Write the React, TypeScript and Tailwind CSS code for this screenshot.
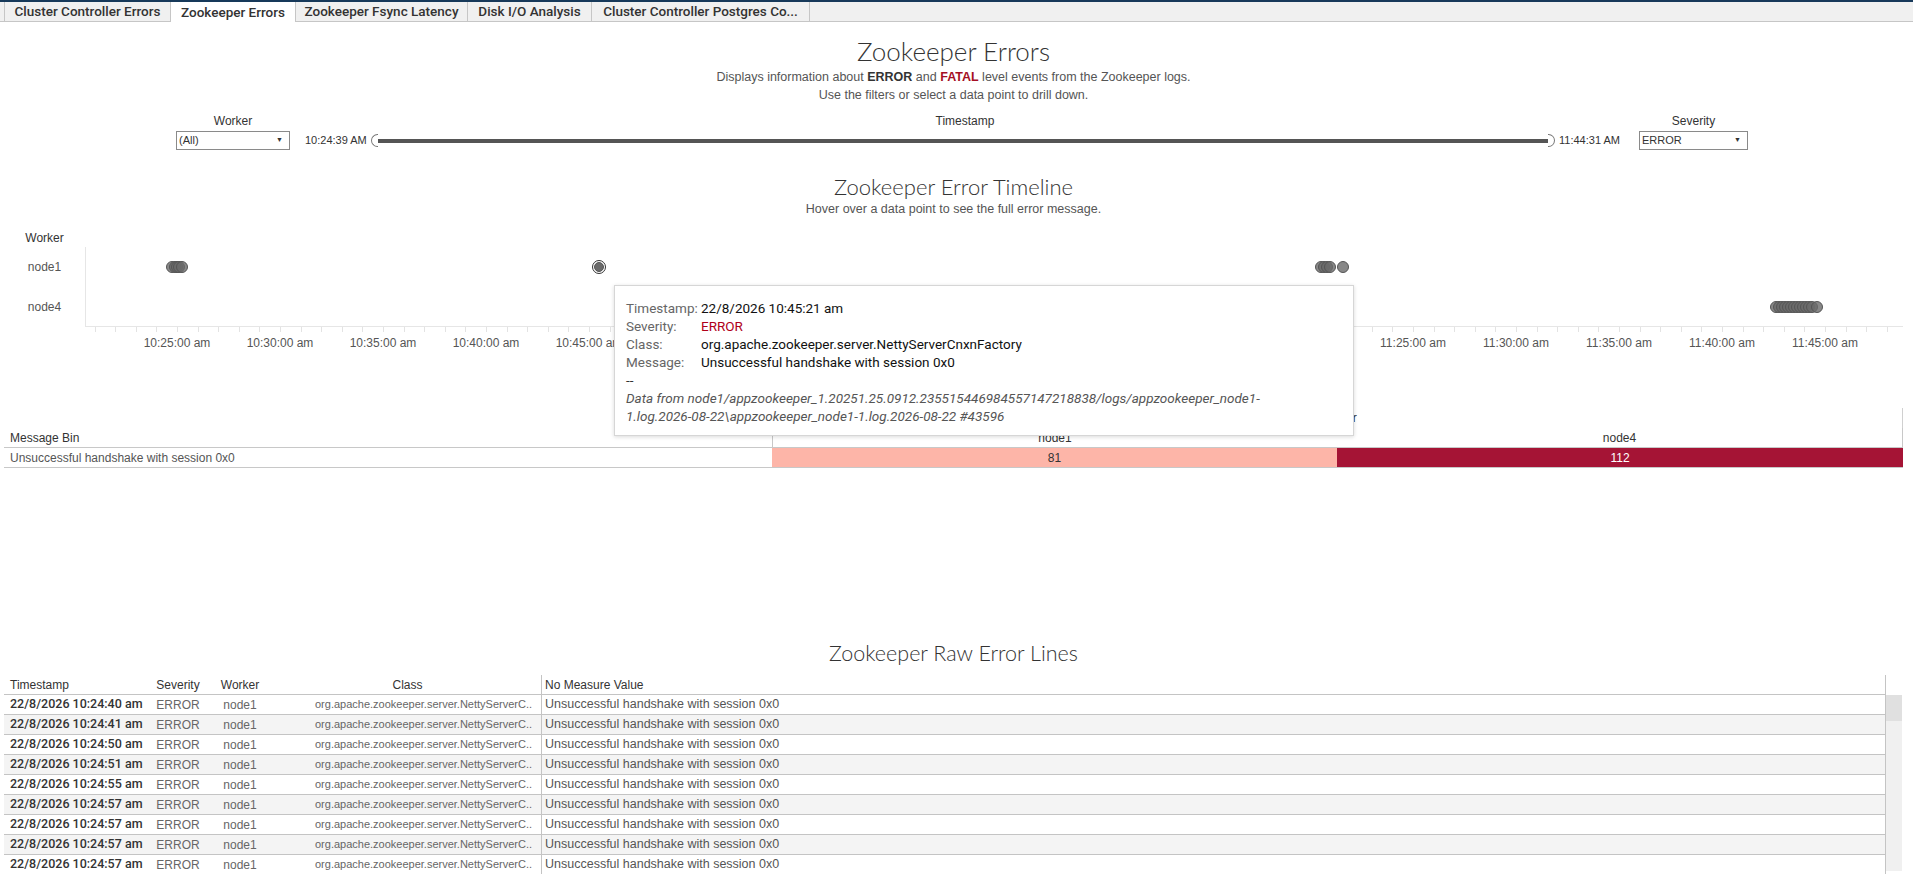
import React from "react";

const tabs = [
  { label: "Cluster Controller Errors", cls: "w-[167px] border-l border-[#c6c6c6] bg-[#f0f0f0]" },
  { label: "Zookeeper Errors", cls: "w-[125px] bg-white h-[20px]" },
  { label: "Zookeeper Fsync Latency", cls: "w-[172px] bg-[#f0f0f0]" },
  { label: "Disk I/O Analysis", cls: "w-[124px] bg-[#f0f0f0]" },
  { label: "Cluster Controller Postgres Co...", cls: "w-[218px] bg-[#f0f0f0]" },
];

const PLOT_LEFT = 85;
const xAt = (t: number) => 177 - PLOT_LEFT + t * 20.6;

const node1Dots = [171, 174, 176, 178, 181, 1320, 1323, 1326, 1329, 1342];
const node4Dots = [1775, 1778, 1781, 1784, 1787, 1790, 1793, 1796, 1799, 1802, 1805, 1808, 1811, 1816];

const axisLabels = Array.from({ length: 17 }, (_, i) => {
  const total = 25 + i * 5;
  const h = 10 + Math.floor(total / 60);
  const m = total % 60;
  return { t: i * 5, text: `${h}:${m.toString().padStart(2, "0")}:00 am` };
});

const ticks = Array.from({ length: 88 }, (_, i) => i - 4);

const rawRows = [
  "22/8/2026 10:24:40 am",
  "22/8/2026 10:24:41 am",
  "22/8/2026 10:24:50 am",
  "22/8/2026 10:24:51 am",
  "22/8/2026 10:24:55 am",
  "22/8/2026 10:24:57 am",
  "22/8/2026 10:24:57 am",
  "22/8/2026 10:24:57 am",
  "22/8/2026 10:24:57 am",
];

function Dot({ x, y }: { x: number; y: number }) {
  return (
    <div
      className="absolute w-[12px] h-[12px] rounded-full bg-[#6a6a6a]/80 border border-[#555]"
      style={{ left: x - PLOT_LEFT - 6, top: y - 6 }}
    />
  );
}

function Dropdown({ value, w }: { value: string; w: string }) {
  return (
    <div className={`${w} h-[19px] border border-[#8a8a8a] bg-white flex items-center justify-between pl-[2px] pr-[6px]`}>
      <span className="text-[11px] text-[#333]">{value}</span>
      <span className="text-[7px] text-[#333]">▼</span>
    </div>
  );
}

export default function App() {
  return (
    <div className="relative w-full h-[874px] overflow-hidden bg-white text-[#333] font-['Liberation_Sans',Arial,sans-serif]">
      {/* Tab bar */}
      <div className="h-[22px] border-t-2 border-t-[#17395a] border-b border-b-[#c6c6c6] bg-[#f0f0f0] flex pl-[4px]">
        {tabs.map((t) => (
          <div
            key={t.label}
            className={`${t.cls} h-[19px] border-r border-[#c6c6c6] flex items-center justify-center text-[13.5px] font-['Roboto',sans-serif] font-medium text-[#333] whitespace-nowrap`}
          >
            {t.label}
          </div>
        ))}
      </div>

      <div className="pl-[4px] pr-[10px]">
        {/* Title */}
        <div className="mt-[14px] text-center leading-[30px] text-[26px] font-['Lato',sans-serif] font-light text-[#333]">
          Zookeeper Errors
        </div>
        <div className="mt-[2px] text-center text-[12.5px] leading-[18px] text-[#555]">
          <div>
            Displays information about <span className="font-bold text-[#333]">ERROR</span> and{" "}
            <span className="font-bold text-[#a50f23]">FATAL</span> level events from the Zookeeper logs.
          </div>
          <div>Use the filters or select a data point to drill down.</div>
        </div>

        {/* Filters */}
        <div className="mt-[8px] flex items-start pl-[172px]">
          <div className="flex flex-col items-center w-[114px]">
            <div className="h-[18px] leading-[18px] text-[12px] text-[#333]">Worker</div>
            <div className="mt-[1px]">
              <Dropdown value="(All)" w="w-[114px]" />
            </div>
          </div>
          <div className="ml-[15px] flex flex-col items-center">
            <div className="h-[18px] leading-[18px] text-[12px] text-[#333]">Timestamp</div>
            <div className="mt-[1px] h-[19px] flex items-center">
              <span className="text-[11px] text-[#333] w-[66px]">10:24:39 AM</span>
              <div className="w-[7px] h-[13px] rounded-l-full border border-[#777] border-r-0 bg-white" />
              <div className="w-[1170px] h-[4px] bg-[#555]" />
              <div className="w-[7px] h-[13px] rounded-r-full border border-[#777] border-l-0 bg-white" />
              <span className="text-[11px] text-[#333] ml-[4px] w-[66px]">11:44:31 AM</span>
            </div>
          </div>
          <div className="ml-[14px] flex flex-col items-center w-[109px]">
            <div className="h-[18px] leading-[18px] text-[12px] text-[#333]">Severity</div>
            <div className="mt-[1px]">
              <Dropdown value="ERROR" w="w-[109px]" />
            </div>
          </div>
        </div>

        {/* Timeline */}
        <div className="mt-[24px] text-center leading-[26px] text-[22px] font-['Lato',sans-serif] font-light text-[#333]">
          Zookeeper Error Timeline
        </div>
        <div className="text-center text-[12.5px] leading-[18px] text-[#555]">
          Hover over a data point to see the full error message.
        </div>

        <div className="mt-[11px] h-[18px] w-[81px] flex items-center justify-center text-[12px] text-[#333]">
          Worker
        </div>
        <div className="flex">
          <div className="w-[81px] flex flex-col text-[12px] text-[#555]">
            <div className="h-[40px] flex items-center justify-center">node1</div>
            <div className="h-[39px] flex items-center justify-center">node4</div>
          </div>
          <div className="relative flex-1 h-[80px] border-l border-b border-[#e6e6e6]">
            {node1Dots.map((x, i) => (
              <Dot key={"a" + i} x={x} y={20} />
            ))}
            {node4Dots.map((x, i) => (
              <Dot key={"b" + i} x={x} y={60} />
            ))}
            <div
              className="absolute w-[14px] h-[14px] rounded-full border border-[#333] bg-white flex items-center justify-center"
              style={{ left: 598 - PLOT_LEFT - 7, top: 20 - 7 }}
            >
              <div className="w-[10px] h-[10px] rounded-full bg-[#6a6a6a] border border-[#555]" />
            </div>
          </div>
        </div>
        <div className="flex h-[26px]">
          <div className="w-[81px]" />
          <div className="relative flex-1">
            {ticks.map((t) => (
              <div
                key={t}
                className="absolute top-0 w-px h-[5px] bg-[#e3e3e3]"
                style={{ left: xAt(t) }}
              />
            ))}
            {axisLabels.map((l) => (
              <div
                key={l.t}
                className="absolute top-[7px] leading-[18px] text-[12px] text-[#555] whitespace-nowrap -translate-x-1/2"
                style={{ left: xAt(l.t) }}
              >
                {l.text}
              </div>
            ))}
          </div>
        </div>

        {/* Heat map */}
        <div className="mt-[55px] grid grid-cols-[768px_565px_1fr] text-[12px]">
          <div className="h-[20px]" />
          <div className="col-span-2 h-[20px] border-l border-r border-[#d0d0d0] flex items-center justify-center text-[#333]">
            Worker
          </div>
          <div className="h-[20px] border-b border-[#c8c8c8] flex items-center pl-[6px] text-[#333]">Message Bin</div>
          <div className="h-[20px] border-b border-l border-[#c8c8c8] flex items-center justify-center text-[#333]">node1</div>
          <div className="h-[20px] border-b border-r border-[#c8c8c8] flex items-center justify-center text-[#333]">node4</div>
          <div className="h-[20px] border-b border-[#c8c8c8] flex items-center pl-[6px] text-[#555]">
            Unsuccessful handshake with session 0x0
          </div>
          <div className="h-[20px] border-b border-[#c8c8c8]">
            <div className="h-[19px] bg-[#fdb5a8] flex items-center justify-center text-[#333]">81</div>
          </div>
          <div className="h-[20px] border-b border-[#c8c8c8]">
            <div className="h-[19px] bg-[#a51435] flex items-center justify-center text-white">112</div>
          </div>
        </div>

        {/* Raw error lines */}
        <div className="mt-[172px] text-center leading-[26px] text-[21.5px] font-['Lato',sans-serif] font-light text-[#333]">
          Zookeeper Raw Error Lines
        </div>
        <div className="mt-[9px] flex">
          <div className="flex-1 border-r border-[#c4c4c4] text-[12px]">
            <div className="grid grid-cols-[146px_56px_68px_267px_1fr] h-[20px] border-b border-[#c4c4c4] text-[#333]">
              <div className="pl-[6px] flex items-center">Timestamp</div>
              <div className="flex items-center justify-center">Severity</div>
              <div className="flex items-center justify-center">Worker</div>
              <div className="flex items-center justify-center">Class</div>
              <div className="border-l border-[#c4c4c4] pl-[3px] flex items-center">No Measure Value</div>
            </div>
            {rawRows.map((ts, i) => (
              <div
                key={i}
                className={`grid grid-cols-[146px_56px_68px_267px_1fr] h-[20px] border-b border-[#c4c4c4] ${
                  i % 2 === 1 ? "bg-[#f4f4f4]" : "bg-white"
                }`}
              >
                <div className="pl-[6px] flex items-center font-['Roboto',sans-serif] font-medium text-[12.5px] text-[#333] whitespace-nowrap">
                  {ts}
                </div>
                <div className="flex items-center justify-center text-[#666]">ERROR</div>
                <div className="flex items-center justify-center text-[#666]">node1</div>
                <div className="flex items-center pl-[41px] text-[11px] text-[#666] whitespace-nowrap overflow-hidden">
                  org.apache.zookeeper.server.NettyServerC..
                </div>
                <div className="border-l border-[#c4c4c4] pl-[3px] flex items-center text-[12.5px] text-[#555] whitespace-nowrap">
                  Unsuccessful handshake with session 0x0
                </div>
              </div>
            ))}
          </div>
          <div className="w-[16px] mt-[20px] h-[176px] bg-[#f0f0f0] flex flex-col">
            <div className="h-[26px] bg-[#e0e0e0]" />
          </div>
          <div className="w-px" />
        </div>
      </div>

      {/* Tooltip */}
      <div className="absolute left-[614px] top-[285px] w-[740px] h-[151px] bg-white border border-[#d6d6d6] shadow-[0_1px_4px_rgba(0,0,0,0.15)] pl-[11px] pt-[13px] text-[13.5px] leading-[18px] font-['Roboto',sans-serif]">
        <div className="flex">
          <span className="w-[75px] text-[#666]">Timestamp:</span>
          <span className="text-[#111]">22/8/2026 10:45:21 am</span>
        </div>
        <div className="flex">
          <span className="w-[75px] text-[#666]">Severity:</span>
          <span className="text-[#b0001a]">ERROR</span>
        </div>
        <div className="flex">
          <span className="w-[75px] text-[#666]">Class:</span>
          <span className="text-[#111]">org.apache.zookeeper.server.NettyServerCnxnFactory</span>
        </div>
        <div className="flex">
          <span className="w-[75px] text-[#666]">Message:</span>
          <span className="text-[#111]">Unsuccessful handshake with session 0x0</span>
        </div>
        <div className="text-[#333]">--</div>
        <div className="italic text-[#555]">
          Data from node1/appzookeeper_1.20251.25.0912.235515446984557147218838/logs/appzookeeper_node1-
        </div>
        <div className="italic text-[#555]">
          1.log.2026-08-22\appzookeeper_node1-1.log.2026-08-22 #43596
        </div>
      </div>
    </div>
  );
}
